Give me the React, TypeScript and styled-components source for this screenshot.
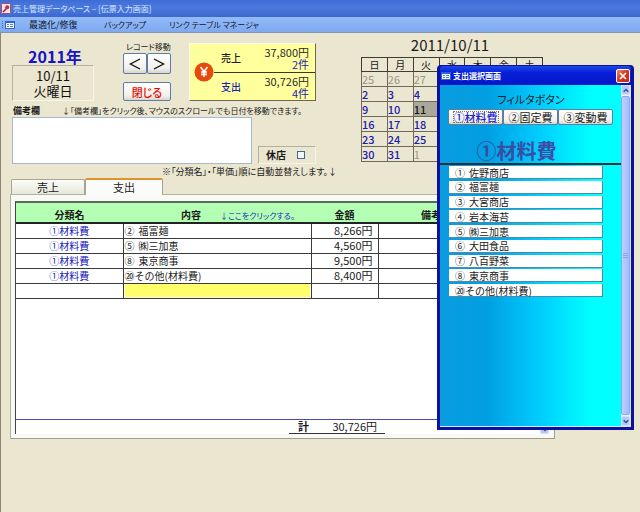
import React from "react";
import styled, { createGlobalStyle, css } from "styled-components";

const JP = '"Noto Sans CJK JP", "Liberation Sans", sans-serif';

const Global = createGlobalStyle`
  * { box-sizing: border-box; }
  body {
    margin: 0;
    background: #ebe6cf;
    color: #1a1a1a;
    font-family: ${JP};
    font-size: 10px;
    font-feature-settings: "palt";
  }
  button, input, textarea { font: inherit; color: inherit; margin: 0; font-feature-settings: inherit; }
`;

const Window = styled.div`
  position: relative;
  min-height: 100vh;
  display: flex;
  flex-direction: column;
  background: #ebe6cf;
`;

const TitleBar = styled.header`
  display: flex;
  align-items: center;
  gap: 2px;
  height: 17px;
  padding: 0 1px;
  background: linear-gradient(#3f6cd6, #4a7ade 45%, #3c68cf);
  color: #dbe7ff;
  font-size: 8px;
  line-height: 16px;
  white-space: nowrap;
`;

const MenuBar = styled.nav`
  display: flex;
  align-items: center;
  height: 15px;
  padding-left: 2px;
  background: linear-gradient(#93bbf8, #7fa9f0);
`;

const MenuItem = styled.button<{ $width: number; $small?: boolean }>`
  width: ${(p) => p.$width}px;
  padding: 0;
  border: 0;
  background: none;
  color: #10182e;
  font-size: ${(p) => (p.$small ? 8 : 9)}px;
  line-height: 14px;
  text-align: left;
  white-space: nowrap;
`;

const MenuIcon = styled.span`
  display: flex;
  width: 27px;
`;

const Form = styled.main`
  flex: 1;
  border-top: 1px solid #8295b5;
  border-left: 1px solid #8f8672;
`;

const Head = styled.section`
  display: flex;
  align-items: flex-start;
  height: 145px;
  padding-left: 11px;
`;

const LeftColumn = styled.div`
  width: 304px;
  padding-top: 10px;
`;

const Summary = styled.div`
  display: flex;
  justify-content: space-between;
  height: 59px;
`;

const DateBlock = styled.div`
  width: 82px;
  text-align: center;
`;

const Year = styled.div`
  height: 22px;
  padding-left: 4px;
  color: #1414c8;
  font-size: 16px;
  font-weight: 700;
  line-height: 26px;
`;

const DayBox = styled.div`
  height: 36px;
  border: 1px solid;
  border-color: #b5b09c #f8f5e6 #f8f5e6 #b5b09c;
  color: #111;
  font-size: 13px;
  line-height: 15px;
  padding-top: 2px;
`;

const RecordNav = styled.div`
  width: 48px;
  margin-left: 11px;
`;

const NavCaption = styled.div`
  height: 10px;
  padding-left: 3px;
  font-size: 8px;
  line-height: 8px;
  white-space: nowrap;
`;

const ButtonPair = styled.div`
  display: grid;
  grid-template-columns: 1fr 1fr;
  margin-bottom: 8px;
`;

const raised = css`
  border: 1px solid #5f7da4;
  border-radius: 2px;
  background: linear-gradient(#ffffff, #f1f0ea 75%, #d9d5c8);
`;

const StepButton = styled.button`
  ${raised}
  display: flex;
  align-items: center;
  justify-content: center;
  height: 21px;
  padding: 0;
`;

const CloseFormButton = styled.button`
  ${raised}
  width: 100%;
  height: 19px;
  padding: 0;
  color: #e80c0c;
  font-size: 11px;
  font-weight: 500;
  line-height: 16px;
`;

const MoneyCard = styled.section`
  display: grid;
  grid-template-columns: 24px 1fr;
  align-items: center;
  width: 127px;
  height: 58px;
  background: #ffff9e;
  border: 1px solid;
  border-color: #fffde8 #6a6850 #6a6850 #fffde8;
  color: #2a2a2a;
`;

const YenBadge = styled.div`
  display: flex;
  justify-content: center;
  padding-left: 3px;
`;

const MoneyLine = styled.div<{ $blue?: boolean }>`
  display: grid;
  grid-template-columns: 32px 1fr;
  align-items: center;
  height: 28px;
  padding: 0 6px 0 7px;
  font-size: 11px;
  line-height: 12px;
  & + & { border-top: 1px solid #3b3b2c; }
  strong { font-size: 10px; font-weight: 500; color: ${(p) => (p.$blue ? "#1c1cb8" : "#1a1a1a")}; }
`;

const Amounts = styled.div`
  text-align: right;
  em { display: block; font-style: normal; color: #2424b0; }
`;

const MemoCaption = styled.div`
  display: flex;
  gap: 22px;
  height: 15px;
  padding: 4px 0 0 1px;
  font-size: 9px;
  line-height: 10px;
  white-space: nowrap;
  label { font-weight: 700; }
`;

const MemoHint = styled.span`
  font-size: 8px;
`;

const MemoRow = styled.div`
  display: flex;
  align-items: flex-end;
  justify-content: space-between;
  height: 47px;
`;

const Memo = styled.textarea`
  display: block;
  width: 240px;
  height: 47px;
  padding: 2px;
  border: 1px solid #a4b9d0;
  background: #fff;
  resize: none;
`;

const ClosedBox = styled.label`
  display: flex;
  align-items: center;
  justify-content: space-between;
  width: 58px;
  height: 18px;
  padding: 0 10px 0 7px;
  border: 1px solid;
  border-color: #b5b09c #f8f5e6 #f8f5e6 #b5b09c;
  font-weight: 700;
  line-height: 14px;
`;

const Tick = styled.input`
  appearance: none;
  width: 8px;
  height: 8px;
  border: 1px solid #3c6c94;
  background: #f6f8f6;
`;

const SortHint = styled.p`
  margin: 2px 0 0 150px;
  font-size: 9px;
  line-height: 11px;
  white-space: nowrap;
`;

const CalendarBlock = styled.section`
  margin-left: 45px;
  padding-top: 3px;
`;

const CalendarTitle = styled.h2`
  margin: 0 0 3px;
  padding-right: 4px;
  font-size: 15px;
  font-weight: 400;
  line-height: 18px;
  text-align: center;
`;

const CalendarTable = styled.table`
  width: 182px;
  table-layout: fixed;
  border-collapse: collapse;
  border: 1px solid #3d3b33;
  line-height: 13px;
  font-size: 11px;
`;

const WeekDay = styled.th`
  height: 14px;
  padding: 0;
  border: 1px solid #3d3b33;
  font-size: 10px;
  font-weight: 400;
  line-height: 12px;
`;

const Day = styled.td<{ $other: boolean; $today: boolean }>`
  height: 15px;
  padding: 0;
  border: 1px solid #6d6a5c;
  color: ${(p) => (p.$other ? "#9a9686" : p.$today ? "#1a1a1a" : "#1c1cb0")};
  background: ${(p) => (p.$today ? "#aca899" : "transparent")};
  font-weight: ${(p) => (p.$other ? 400 : 500)};
  text-align: left;
`;

const TabRow = styled.div`
  display: flex;
  align-items: flex-end;
  height: 16px;
  padding-left: 10px;
`;

const Tab = styled.button<{ $active?: boolean }>`
  width: ${(p) => (p.$active ? 78 : 74)}px;
  height: ${(p) => (p.$active ? 17 : 15)}px;
  margin-bottom: ${(p) => (p.$active ? -1 : 0)}px;
  padding: 0;
  position: relative;
  border: 1px solid #a3a595;
  border-top: ${(p) => (p.$active ? "2px solid #e0952c" : "1px solid #a3a595")};
  border-bottom: 0;
  border-radius: 2px 2px 0 0;
  background: ${(p) => (p.$active ? "#fbfbf9" : "linear-gradient(#fcfcf8, #e9e7da)")};
  font-size: 11px;
  line-height: 13px;
`;

const Panel = styled.section`
  margin: 0 85px 0 9px;
  padding: 6px 5px 4px 4px;
  border: 1px solid #b0b2a2;
  border-right-color: #9c9e90;
  border-bottom-color: #9c9e90;
  background: #f9f9f5;
`;

const Sheet = styled.div`
  display: flex;
  height: 233px;
  border-top: 2px solid #5b6b5b;
  border-left: 1px solid #444;
  background: #fff;
`;

const SheetBody = styled.div`
  flex: 1;
  min-width: 0;
  display: flex;
  flex-direction: column;
`;

const SlipTable = styled.table`
  width: 100%;
  table-layout: fixed;
  border-collapse: collapse;
  line-height: 13px;
  font-feature-settings: normal;
`;

const SlipHead = styled.th<{ $inset?: number }>`
  height: 20px;
  padding: 4px 0 0 ${(p) => p.$inset ?? 0}px;
  border-bottom: 2px solid #222;
  background: #b3ffb3;
  font-weight: 700;
  text-align: ${(p) => (p.$inset ? "left" : "center")};
  white-space: nowrap;
`;

const HeadHint = styled.span`
  margin-left: 19px;
  color: #2030c0;
  font-size: 8px;
  font-weight: 400;
  font-feature-settings: "palt";
`;

const Cell = styled.td<{ $kind: "group" | "item" | "price" | "memo" }>`
  height: 15px;
  padding: ${(p) => (p.$kind === "item" ? "0 1px" : "0")};
  border: 1px solid #3a3a3a;
  border-left-width: ${(p) => (p.$kind === "group" ? 0 : 1)}px;
  ${(p) => p.$kind === "group" && css`color: #2020c0; text-align: center;`}
  ${(p) => p.$kind === "price" && css`padding-right: 5px; font-size: 11px; text-align: right;`}
`;

const Mark = styled.span`
  display: inline-block;
  width: 14px;
`;

const NewEntry = styled.input`
  display: block;
  width: 100%;
  height: 13px;
  padding: 0;
  border: 0;
  background: #ffff6b;
`;

const TotalRow = styled.div`
  margin-top: auto;
  height: 15px;
  border-top: 1px solid #5048a8;
  padding-left: 273px;
`;

const Total = styled.div`
  display: flex;
  justify-content: space-between;
  width: 96px;
  height: 14px;
  padding: 0 8px 0 9px;
  border-bottom: 1px solid #333;
  font-size: 11px;
  line-height: 13px;
`;

const Rail = styled.div`
  display: flex;
  flex-direction: column;
  width: 9px;
  background: #eef1fb;
`;

const ArrowButton = styled.button`
  display: flex;
  align-items: center;
  justify-content: center;
  width: 100%;
  height: 10px;
  padding: 0;
  border: 1px solid #d5e0ff;
  border-radius: 2px;
  background: #b4c7fa;
`;

const Thumb = styled.div`
  flex: 1;
  display: flex;
  align-items: center;
  justify-content: center;
  margin: 1px 0;
  border: 1px solid #8ea8ec;
  border-radius: 2px;
  background: linear-gradient(90deg, #bdcfff, #a5bcfa);
`;

const Dialog = styled.section`
  position: absolute;
  top: 65px;
  left: 437px;
  width: 197px;
  border: solid #0b11a0;
  border-width: 1px 3px 3px;
  border-radius: 4px 4px 0 0;
  background: #0b11a0;
`;

const DialogBar = styled.header`
  display: flex;
  align-items: center;
  gap: 2px;
  height: 19px;
  padding: 0 1px 0 0;
  border-radius: 3px 3px 0 0;
  background: linear-gradient(#1f49e8, #0720d8 35%, #0515c8);
  color: #fff;
  h2 { flex: 1; margin: 0; font-size: 8px; font-weight: 700; line-height: 16px; }
`;

const DialogClose = styled.button`
  display: flex;
  align-items: center;
  justify-content: center;
  width: 14px;
  height: 14px;
  padding: 0;
  border: 1px solid #fff;
  border-radius: 2px;
  background: linear-gradient(135deg, #ef8a70, #d8361c 50%, #c02810);
`;

const DialogMain = styled.div`
  display: flex;
  border: solid #d5e6ff;
  border-width: 0 1px 1px 0;
`;

const Chooser = styled.div`
  flex: 1;
  height: 341px;
  background: linear-gradient(90deg, #0a9cdf 0%, #009fe2 26%, #00b8f2 42%, #00d2ff 58%, #00e8ff 70%, #00ffff 84%);
`;

const FilterTitle = styled.h3`
  margin: 0;
  padding: 7px 0 0 1px;
  font-size: 11px;
  font-weight: 400;
  line-height: 14px;
  text-align: center;
`;

const Filters = styled.div`
  display: grid;
  grid-template-columns: repeat(3, 1fr);
  margin: 3px 8px 0;
`;

const FilterButton = styled.button<{ $on?: boolean }>`
  ${raised}
  display: flex;
  align-items: center;
  justify-content: center;
  height: 16px;
  padding: 0;
  color: ${(p) => (p.$on ? "#1c1cd0" : "#1a1a1a")};
  font-size: 11px;
  line-height: 12px;
  font-weight: ${(p) => (p.$on ? 500 : 400)};
  span { padding: 0 1px; outline: ${(p) => (p.$on ? "1px dotted #8a7a50" : "none")}; outline-offset: -1px; }
`;

const GroupTitle = styled.div`
  height: 40px;
  padding: 14px 28px 0 0;
  border-bottom: 2px solid #10303c;
  color: #3a4ca4;
  font-size: 20px;
  font-weight: 700;
  line-height: 24px;
  text-align: center;
`;

const Suppliers = styled.ul`
  display: grid;
  grid-auto-rows: 13px;
  align-content: space-between;
  height: 131px;
  margin: 1px 18px 0 9px;
  padding: 0;
  list-style: none;
`;

const Supplier = styled.button`
  display: block;
  width: 100%;
  height: 13px;
  padding: 0 0 0 6px;
  border: solid #4a8cac;
  border-width: 0 1px 1px 0;
  background: #fff;
  font-feature-settings: normal;
  line-height: 11px;
  text-align: left;
`;

const weekDays = ["日", "月", "火", "水", "木", "金", "土"];
const weeks = [
  ["25", "26", "27"],
  ["2", "3", "4"],
  ["9", "10", "11"],
  ["16", "17", "18"],
  ["23", "24", "25"],
  ["30", "31", "1"],
];

const isOtherMonth = (week: number, day: number) => week === 0 || (week === 5 && day > 1);

const slips = [
  { mark: "②", name: "福富麺", price: "8,266円" },
  { mark: "⑤", name: "㈱三加恵", price: "4,560円" },
  { mark: "⑧", name: "東京商事", price: "9,500円" },
  { mark: "⑳", name: "その他(材料費)", price: "8,400円" },
];

const suppliers = [
  ["①", "佐野商店"],
  ["②", "福富麺"],
  ["③", "大宮商店"],
  ["④", "岩本海苔"],
  ["⑤", "㈱三加恵"],
  ["⑥", "大田食品"],
  ["⑦", "八百野菜"],
  ["⑧", "東京商事"],
  ["⑳", "その他(材料費)"],
];

function Entry({ mark, name }: { mark: string; name: string }) {
  return mark === "⑳" ? <>{mark + name}</> : <><Mark>{mark}</Mark>{name}</>;
}

function AppIcon() {
  return (
    <svg width="10" height="11" viewBox="0 0 10 11" aria-hidden="true">
      <rect x="0.5" y="0.5" width="9" height="10" rx="1" fill="#f6e3e8" stroke="#b04a62" />
      <path d="M2 9 L6 5" stroke="#a8203c" strokeWidth="1.6" fill="none" />
      <circle cx="6.2" cy="4.2" r="2" fill="#b8304c" />
    </svg>
  );
}

function FormIcon({ grip }: { grip?: boolean }) {
  return (
    <svg width={grip ? 13 : 11} height="8" viewBox={grip ? "-2 0 13 8" : "0 0 11 8"} aria-hidden="true">
      {grip && <path d="M-1.5 0 V8" stroke="#3f66b0" strokeDasharray="1 1" />}
      <rect x="1.5" y="0.5" width="9" height="7" fill="#eef4ff" stroke="#3c68c4" />
      <path d="M1 1 H11" stroke="#2f62d8" strokeWidth="2" />
      <path d="M3 3.5 H5 M6 3.5 H9 M3 5.5 H5 M6 5.5 H9" stroke="#5b82cc" />
    </svg>
  );
}

function Chevron({ up }: { up?: boolean }) {
  return (
    <svg width="6" height="5" viewBox="0 0 6 5" aria-hidden="true">
      <path d={up ? "M0.7 3.7 L3 1.4 L5.3 3.7" : "M0.7 1.2 L3 3.5 L5.3 1.2"} fill="none" stroke="#33508c" strokeWidth="1.4" />
    </svg>
  );
}

function Step({ back }: { back?: boolean }) {
  return (
    <svg width="12" height="12" viewBox="0 0 12 12" aria-hidden="true">
      <path d={back ? "M11 1 L1.5 6 L11 11" : "M1 1 L10.5 6 L1 11"} fill="none" stroke="#111" strokeWidth="1.4" />
    </svg>
  );
}

export default function App() {
  return (
    <Window>
      <Global />
      <TitleBar>
        <AppIcon />
        売上管理データベース – [伝票入力画面]
      </TitleBar>
      <MenuBar>
        <MenuIcon><FormIcon grip /></MenuIcon>
        <MenuItem $width={75}>最適化/修復</MenuItem>
        <MenuItem $width={65} $small>バックアップ</MenuItem>
        <MenuItem $width={90} $small>リンク テーブル マネージャ</MenuItem>
      </MenuBar>
      <Form>
        <Head>
          <LeftColumn>
            <Summary>
              <DateBlock>
                <Year>2011年</Year>
                <DayBox>10/11<br />火曜日</DayBox>
              </DateBlock>
              <RecordNav>
                <NavCaption>レコード移動</NavCaption>
                <ButtonPair>
                  <StepButton aria-label="前へ"><Step back /></StepButton>
                  <StepButton aria-label="次へ"><Step /></StepButton>
                </ButtonPair>
                <CloseFormButton>閉じる</CloseFormButton>
              </RecordNav>
              <MoneyCard>
                <YenBadge>
                  <svg width="20" height="20" viewBox="0 0 20 20" aria-hidden="true">
                    <circle cx="10" cy="10" r="9.5" fill="#e8480c" />
                    <path d="M6.5 5 L10 9.5 L13.5 5 M10 9.5 V15 M7 10 H13 M7 12.4 H13" fill="none" stroke="#fff" strokeWidth="1.6" />
                  </svg>
                </YenBadge>
                <div>
                  <MoneyLine>
                    <strong>売上</strong>
                    <Amounts>37,800円<em>2件</em></Amounts>
                  </MoneyLine>
                  <MoneyLine $blue>
                    <strong>支出</strong>
                    <Amounts>30,726円<em>4件</em></Amounts>
                  </MoneyLine>
                </div>
              </MoneyCard>
            </Summary>
            <MemoCaption>
              <label htmlFor="memo">備考欄</label>
              <MemoHint>↓「備考欄」をクリック後、マウスのスクロールでも日付を移動できます。</MemoHint>
            </MemoCaption>
            <MemoRow>
              <Memo id="memo" />
              <ClosedBox>休店<Tick type="checkbox" /></ClosedBox>
            </MemoRow>
            <SortHint>※「分類名」・「単価」順に自動並替えします。↓</SortHint>
          </LeftColumn>
          <CalendarBlock>
            <CalendarTitle>2011/10/11</CalendarTitle>
            <CalendarTable>
              <thead>
                <tr>{weekDays.map((d) => <WeekDay key={d}>{d}</WeekDay>)}</tr>
              </thead>
              <tbody>
                {weeks.map((week, w) => (
                  <tr key={w}>
                    {weekDays.map((name, d) => (
                      <Day key={name} $other={isOtherMonth(w, d)} $today={week[d] === "11"}>
                        {week[d]}
                      </Day>
                    ))}
                  </tr>
                ))}
              </tbody>
            </CalendarTable>
          </CalendarBlock>
        </Head>
        <TabRow role="tablist">
          <Tab role="tab" aria-selected={false}>売上</Tab>
          <Tab role="tab" aria-selected $active>支出</Tab>
        </TabRow>
        <Panel>
          <Sheet>
            <SheetBody>
              <SlipTable>
                <colgroup>
                  <col width="107" />
                  <col width="188" />
                  <col width="67" />
                  <col />
                </colgroup>
                <thead>
                  <tr>
                    <SlipHead>分類名</SlipHead>
                    <SlipHead $inset={58}>
                      <span>内容</span>
                      <HeadHint>↓ここをクリックする。</HeadHint>
                    </SlipHead>
                    <SlipHead>金額</SlipHead>
                    <SlipHead $inset={43}>備考欄</SlipHead>
                  </tr>
                </thead>
                <tbody>
                  {slips.map((s) => (
                    <tr key={s.mark}>
                      <Cell $kind="group">①材料費</Cell>
                      <Cell $kind="item"><Entry mark={s.mark} name={s.name} /></Cell>
                      <Cell $kind="price">{s.price}</Cell>
                      <Cell $kind="memo" />
                    </tr>
                  ))}
                  <tr>
                    <Cell $kind="group" />
                    <Cell $kind="item"><NewEntry aria-label="内容" /></Cell>
                    <Cell $kind="price" />
                    <Cell $kind="memo" />
                  </tr>
                </tbody>
              </SlipTable>
              <TotalRow>
                <Total><b>計</b><span>30,726円</span></Total>
              </TotalRow>
            </SheetBody>
            <Rail>
              <ArrowButton aria-label="上へ"><Chevron up /></ArrowButton>
              <Thumb />
              <ArrowButton aria-label="下へ"><Chevron /></ArrowButton>
            </Rail>
          </Sheet>
        </Panel>
      </Form>
      <Dialog role="dialog" aria-labelledby="chooser-title">
        <DialogBar>
          <FormIcon />
          <h2 id="chooser-title">支出選択画面</h2>
          <DialogClose aria-label="閉じる">
            <svg width="8" height="8" viewBox="0 0 8 8" aria-hidden="true">
              <path d="M1 1 L7 7 M7 1 L1 7" stroke="#fff" strokeWidth="1.7" />
            </svg>
          </DialogClose>
        </DialogBar>
        <DialogMain>
          <Chooser>
            <FilterTitle>フィルタボタン</FilterTitle>
            <Filters>
              <FilterButton $on><span>①材料費</span></FilterButton>
              <FilterButton><span>②固定費</span></FilterButton>
              <FilterButton><span>③変動費</span></FilterButton>
            </Filters>
            <GroupTitle>①材料費</GroupTitle>
            <Suppliers>
              {suppliers.map(([mark, name]) => (
                <li key={mark}>
                  <Supplier><Entry mark={mark} name={name} /></Supplier>
                </li>
              ))}
            </Suppliers>
          </Chooser>
          <Rail>
            <ArrowButton aria-label="上へ"><Chevron up /></ArrowButton>
            <Thumb>
              <svg width="5" height="5" viewBox="0 0 5 5" aria-hidden="true">
                <path d="M0 0.5 H5 M0 2.5 H5 M0 4.5 H5" stroke="#8ca6ee" />
              </svg>
            </Thumb>
            <ArrowButton aria-label="下へ"><Chevron /></ArrowButton>
          </Rail>
        </DialogMain>
      </Dialog>
    </Window>
  );
}
